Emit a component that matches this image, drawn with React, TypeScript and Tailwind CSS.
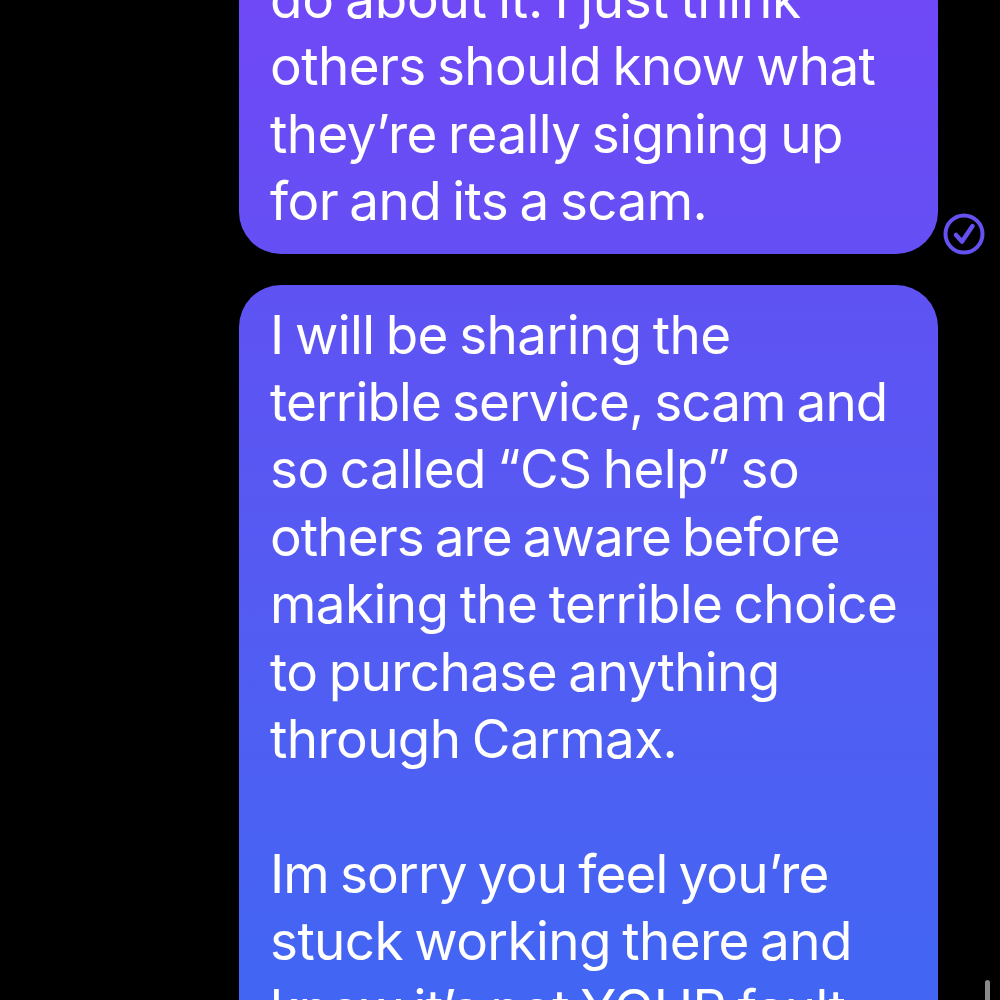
const firstLines = [
  { text: "do about it. I just think", tracking: "tracking-[-0.27px]" },
  { text: "others should know what", tracking: "" },
  { text: "they’re really signing up", tracking: "" },
  { text: "for and its a scam.", tracking: "" },
];
const secondLines = [
  { text: "I will be sharing the", tracking: "" },
  { text: "terrible service, scam and", tracking: "tracking-[-0.92px]" },
  { text: "so called “CS help” so", tracking: "" },
  { text: "others are aware before", tracking: "tracking-[-0.92px]" },
  { text: "making the terrible choice", tracking: "" },
  { text: "to purchase anything", tracking: "" },
  { text: "through Carmax.", tracking: "" },
  { text: "\u00a0", tracking: "" },
  { text: "Im sorry you feel you’re", tracking: "tracking-[-0.86px]" },
  { text: "stuck working there and", tracking: "" },
  { text: "know it’s not YOUR fault", tracking: "" },
];

function Lines({ lines }: { lines: { text: string; tracking: string }[] }) {
  return (
    <>
      {lines.map((line, i) => (
        <div key={i} className={line.tracking}>
          {line.text}
        </div>
      ))}
    </>
  );
}

export default function App() {
  return (
    <div className="relative h-[1000px] w-[1000px] overflow-hidden bg-black font-['Inter','Liberation_Sans',sans-serif] text-[53px] leading-[67.4px] tracking-[-0.6px] [word-spacing:-3px] text-white">
      <div className="-mt-[34px] flex flex-col gap-[31px] pl-[239px]">
        <div className="relative w-[699px] rounded-b-[42px] bg-gradient-to-b from-[#7148f7] to-[#644ff4] pb-[18px] pl-[31px] whitespace-nowrap">
          <Lines lines={firstLines} />
          <svg className="absolute bottom-0 -right-[47px] h-[42px] w-[42px] translate-y-px" viewBox="0 0 42 42" fill="none">
            <circle cx="21" cy="21" r="18.5" stroke="#6451f0" strokeWidth="4" />
            <path d="M13 22l6 6.5L29.5 13" stroke="#6451f0" strokeWidth="4.5" strokeLinecap="round" strokeLinejoin="round" />
          </svg>
        </div>
        <div className="w-[699px] rounded-t-[42px] bg-gradient-to-b from-[#5f52f3] to-[#3f67f3] pl-[31px] pt-[17px] whitespace-nowrap">
          <Lines lines={secondLines} />
        </div>
      </div>
      <div className="absolute bottom-0 right-[10px] h-[20px] w-[5px] rounded-t-full bg-[#8a8a8a]" />
    </div>
  );
}
